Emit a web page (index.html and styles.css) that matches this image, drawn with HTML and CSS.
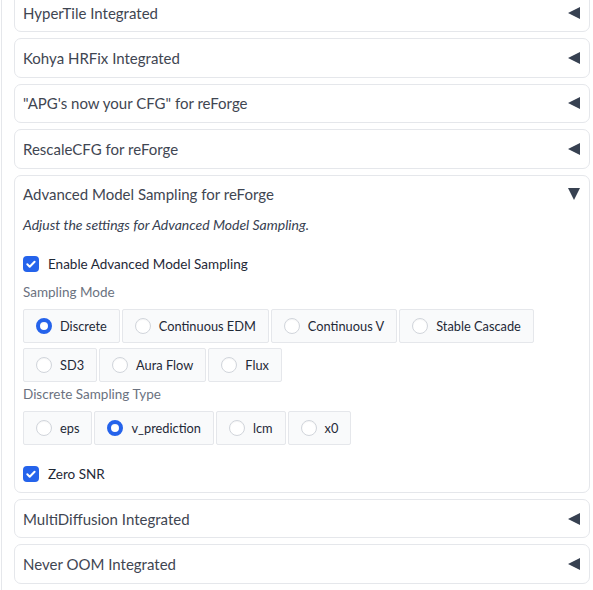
FILE: index.html
```html
<!DOCTYPE html>
<html>
<head>
<meta charset="utf-8">
<link rel="stylesheet" href="styles.css">
</head>
<body>
<div class="panel">
  <div class="acc"><div class="acc-head"><span>HyperTile Integrated</span><span class="tri left"></span></div></div>
  <div class="acc"><div class="acc-head"><span>Kohya HRFix Integrated</span><span class="tri left"></span></div></div>
  <div class="acc"><div class="acc-head"><span>"APG's now your CFG" for reForge</span><span class="tri left"></span></div></div>
  <div class="acc"><div class="acc-head"><span>RescaleCFG for reForge</span><span class="tri left"></span></div></div>
  <div class="acc open">
    <div class="acc-head"><span>Advanced Model Sampling for reForge</span><span class="tri down"></span></div>
    <div class="acc-body">
      <p class="desc">Adjust the settings for Advanced Model Sampling.</p>
      <label class="check"><span class="box"><svg viewBox="0 0 16 16" width="16" height="16"><path d="M4.3 8.3l2.4 2.4 4.9-5" fill="none" stroke="#fff" stroke-width="2" stroke-linecap="round" stroke-linejoin="round"/></svg></span>Enable Advanced Model Sampling</label>
      <div class="group">
        <div class="group-label">Sampling Mode</div>
        <div class="radios">
          <label class="radio on"><span class="dot"></span>Discrete</label>
          <label class="radio"><span class="dot"></span>Continuous EDM</label>
          <label class="radio"><span class="dot"></span>Continuous V</label>
          <label class="radio"><span class="dot"></span>Stable Cascade</label>
          <label class="radio"><span class="dot"></span>SD3</label>
          <label class="radio"><span class="dot"></span>Aura Flow</label>
          <label class="radio"><span class="dot"></span>Flux</label>
        </div>
      </div>
      <div class="group tight">
        <div class="group-label">Discrete Sampling Type</div>
        <div class="radios">
          <label class="radio"><span class="dot"></span>eps</label>
          <label class="radio on"><span class="dot"></span>v_prediction</label>
          <label class="radio"><span class="dot"></span>lcm</label>
          <label class="radio"><span class="dot"></span>x0</label>
        </div>
      </div>
      <label class="check snr"><span class="box"><svg viewBox="0 0 16 16" width="16" height="16"><path d="M4.3 8.3l2.4 2.4 4.9-5" fill="none" stroke="#fff" stroke-width="2" stroke-linecap="round" stroke-linejoin="round"/></svg></span>Zero SNR</label>
    </div>
  </div>
  <div class="acc"><div class="acc-head"><span>MultiDiffusion Integrated</span><span class="tri left"></span></div></div>
  <div class="acc"><div class="acc-head"><span>Never OOM Integrated</span><span class="tri left"></span></div></div>
</div>
</body>
</html>
```
FILE: styles.css
```css
* { box-sizing: border-box; }
body {
  margin: 0;
  background: #fff;
  font-family: Lato, "Open Sans", sans-serif;
  color: #374151;
}
.panel {
  margin-top: -7px;
  margin-left: 1px;
  border-left: 1px solid #e5e7eb;
  padding: 0 3px 12px 12px;
  display: flex;
  flex-direction: column;
  gap: 6px;
}
.acc {
  border: 1px solid #e5e7eb;
  border-radius: 7px;
  background: #fff;
}
.acc-head {
  height: 37.4px;
  padding: 0 9px 0 8px;
  display: flex;
  align-items: center;
  justify-content: space-between;
  font-size: 15px;
  color: #3f4652;
}
.tri { width: 0; height: 0; display: block; }
.tri.left {
  border-top: 6px solid transparent;
  border-bottom: 6px solid transparent;
  border-right: 12px solid #374151;
}
.tri.down {
  border-left: 6.5px solid transparent;
  border-right: 6.5px solid transparent;
  border-top: 12px solid #374151;
}
.acc-body {
  padding: 0 8px 9px 8px;
  display: flex;
  flex-direction: column;
}
.desc {
  margin: 2px 0 0;
  font-size: 14px;
  font-style: italic;
  color: #374151;
  line-height: 20px;
}
.check {
  display: flex;
  align-items: center;
  gap: 9px;
  font-size: 13.5px;
  color: #1f2937;
  margin-top: 20px;
  height: 18px;
}
.check .box {
  width: 16px;
  height: 16px;
  border-radius: 4px;
  background: #2563eb;
  display: flex;
}
.check.snr { margin-top: 20px; }
.group { margin-top: 10px; }
.group.tight { margin-top: 3px; }
.group-label {
  font-size: 13.5px;
  color: #6b7280;
  line-height: 18px;
  margin-bottom: 8px;
}
.radios {
  display: flex;
  flex-wrap: wrap;
  gap: 5px 2px;
}
.radio {
  height: 34px;
  display: flex;
  align-items: center;
  gap: 8px;
  padding: 0 12px;
  border: 1px solid #e5e7eb;
  border-radius: 2px;
  background: #f9fafb;
  font-size: 12.8px;
  color: #1f2937;
}
.dot {
  width: 16px;
  height: 16px;
  border-radius: 50%;
  border: 1px solid #d1d5db;
  background: #fff;
  box-shadow: inset 0 1px 1px rgba(0,0,0,0.04);
}
.radio.on .dot {
  border: 4px solid #2563eb;
  background: #fff;
}
```
